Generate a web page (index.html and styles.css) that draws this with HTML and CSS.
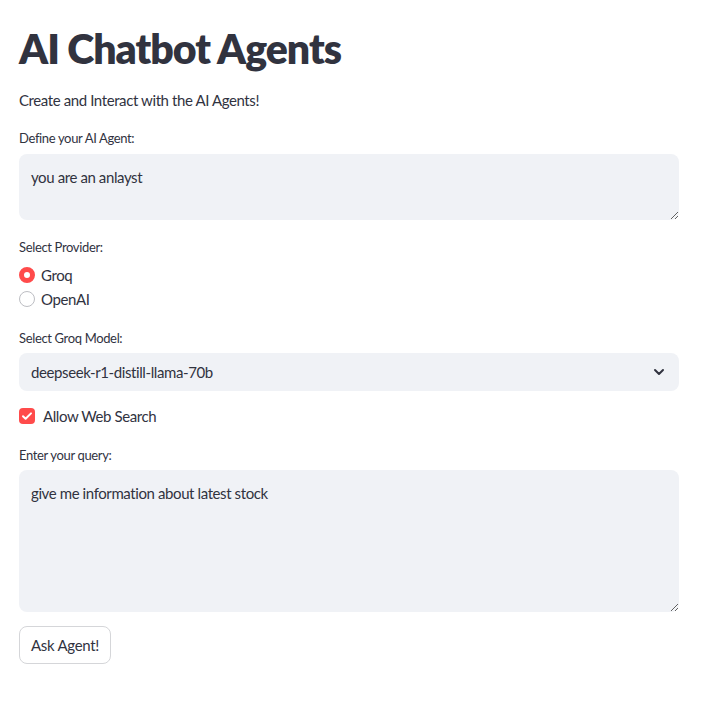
FILE: index.html
```html
<!DOCTYPE html>
<html lang="en">
<head>
<meta charset="utf-8">
<title>AI Chatbot Agents</title>
<link rel="stylesheet" href="styles.css">
</head>
<body>
<main class="page">
  <h1 class="title">AI Chatbot Agents</h1>
  <p class="subtitle">Create and Interact with the AI Agents!</p>

  <label class="label label-first" for="agent">Define your AI Agent:</label>
  <textarea id="agent" class="textarea textarea-short">you are an anlayst</textarea>

  <div class="label label-gap">Select Provider:</div>
  <div class="radios">
    <div class="radio-row">
      <span class="radio radio-on"></span>
      <span class="radio-text">Groq</span>
    </div>
    <div class="radio-row">
      <span class="radio"></span>
      <span class="radio-text">OpenAI</span>
    </div>
  </div>

  <div class="label label-gap">Select Groq Model:</div>
  <div class="select">
    <span class="select-value">deepseek-r1-distill-llama-70b</span>
    <svg class="chevron" width="16" height="16" viewBox="0 0 16 16" aria-hidden="true">
      <path d="M4 6l4 4 4-4" fill="none" stroke="#31333f" stroke-width="2" stroke-linecap="round" stroke-linejoin="round"/>
    </svg>
  </div>

  <div class="check-row">
    <span class="checkbox">
      <svg width="16" height="16" viewBox="0 0 16 16" aria-hidden="true">
        <path d="M4 8.2l2.6 2.6L12 5.4" fill="none" stroke="#fff" stroke-width="2" stroke-linecap="round" stroke-linejoin="round"/>
      </svg>
    </span>
    <span class="check-text">Allow Web Search</span>
  </div>

  <label class="label label-gap" for="query">Enter your query:</label>
  <textarea id="query" class="textarea textarea-tall">give me information about latest stock</textarea>

  <button class="button" type="button">Ask Agent!</button>
</main>
</body>
</html>
```
FILE: styles.css
```css
* { box-sizing: border-box; }

html, body {
  margin: 0;
  background: #ffffff;
}

body {
  font-family: Lato, "Noto Sans", sans-serif;
  color: #31333f;
}

.page {
  display: flex;
  flex-direction: column;
  align-items: stretch;
  padding: 23px 32px 40px 19px;
}

.title {
  margin: 0;
  font-size: 41px;
  line-height: 52.8px;
  font-weight: 800;
  letter-spacing: -1px;
}

.subtitle {
  margin: 12px 0 0;
  font-size: 15px;
  letter-spacing: -0.4px;
  line-height: 25.6px;
}

.label {
  display: block;
  font-size: 13px;
  letter-spacing: -0.35px;
  line-height: 22px;
}

.label-first { margin-top: 14px; }
.label-gap { margin-top: 16px; }

.textarea {
  display: block;
  width: 100%;
  margin-top: 5px;
  border: none;
  outline: none;
  border-radius: 8px;
  background: #f0f2f6;
  color: #31333f;
  font-family: inherit;
  font-size: 15px;
  letter-spacing: -0.4px;
  line-height: 25.6px;
  padding: 11px 12px;
  resize: vertical;
}

.textarea-short { height: 66px; }
.textarea-tall { height: 142px; margin-top: 4px; }

.radios {
  display: flex;
  flex-direction: column;
  margin-top: 5px;
}

.radio-row {
  display: flex;
  align-items: center;
  height: 24px;
  gap: 6px;
}

.radio {
  width: 16px;
  height: 16px;
  border-radius: 50%;
  border: 1px solid #bdbec3;
  background: #fff;
  flex: none;
}

.radio-on {
  border: 5px solid #ff4b4b;
  background: #fff;
}

.radio-text {
  font-size: 15px;
  letter-spacing: -0.4px;
  line-height: 24px;
}

.select {
  margin-top: 4px;
  height: 38px;
  border-radius: 8px;
  background: #f0f2f6;
  display: flex;
  align-items: center;
  justify-content: space-between;
  padding: 0 12px;
}

.select-value {
  font-size: 15px;
  letter-spacing: -0.4px;
  line-height: 24px;
}

.check-row {
  display: flex;
  align-items: center;
  gap: 8px;
  height: 24px;
  margin-top: 13px;
}

.checkbox {
  width: 16px;
  height: 16px;
  border-radius: 4px;
  background: #ff4b4b;
  display: flex;
  flex: none;
}

.check-text {
  font-size: 15px;
  letter-spacing: -0.4px;
  line-height: 24px;
}

.button {
  align-self: flex-start;
  margin-top: 14px;
  height: 38px;
  padding: 0 11px;
  border: 1px solid #d5d6d9;
  border-radius: 8px;
  background: #fff;
  color: #31333f;
  font-family: inherit;
  font-size: 15px;
  letter-spacing: -0.3px;
}
```
